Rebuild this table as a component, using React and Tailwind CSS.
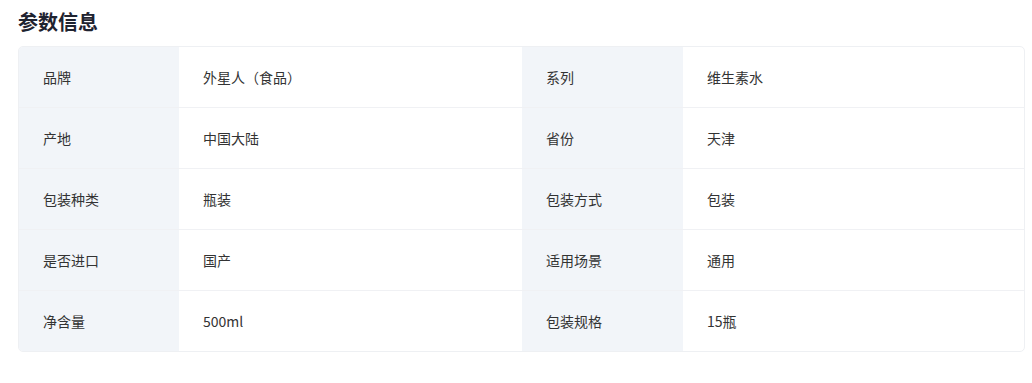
const params = [
  ["品牌", "外星人（食品）", "系列", "维生素水"],
  ["产地", "中国大陆", "省份", "天津"],
  ["包装种类", "瓶装", "包装方式", "包装"],
  ["是否进口", "国产", "适用场景", "通用"],
  ["净含量", "500ml", "包装规格", "15瓶"],
];

const App = () => {
  return (
    <div
      className="w-[1032px] h-[383px] bg-white px-[18px] pt-[7px]"
      style={{ fontFamily: '"Noto Sans CJK SC", "Noto Sans", sans-serif' }}
    >
      <h2 className="text-[20px] font-bold leading-[29px] text-[#1f2330]">参数信息</h2>

      {/* PARAM TABLE */}
      <div className="mt-[10px] w-[1007px] rounded-[5px] border border-[#eef0f3] overflow-hidden">
        {params.map((row, i) => (
          <div
            key={i}
            className={`grid grid-cols-[160px_343px_161px_1fr] h-[60px] box-content text-[14px] text-[#333] ${
              i > 0 ? "border-t border-[#f0f1f4]" : ""
            }`}
          >
            <div className="bg-[#f2f5f9] flex items-center pl-[24px]">{row[0]}</div>
            <div className="flex items-center pl-[24px]">{row[1]}</div>
            <div className="bg-[#f2f5f9] flex items-center pl-[24px]">{row[2]}</div>
            <div className="flex items-center pl-[24px]">{row[3]}</div>
          </div>
        ))}
      </div>
    </div>
  );
};

export default App;
